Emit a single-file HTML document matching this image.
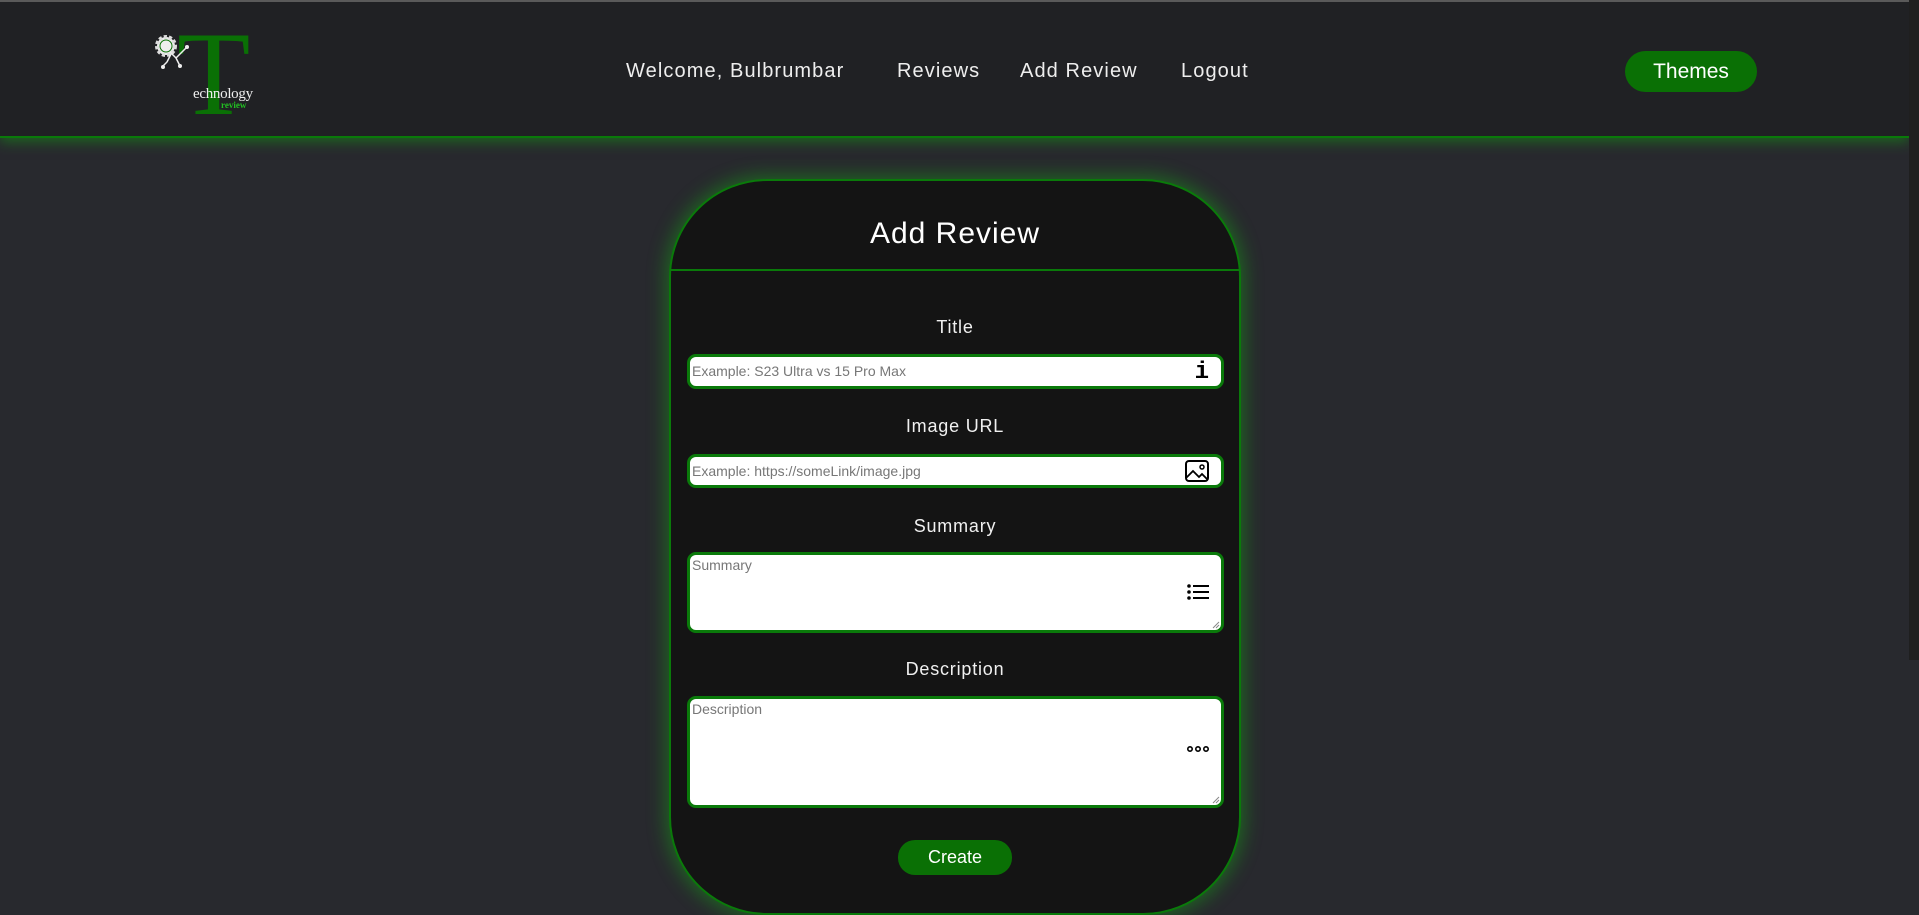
<!DOCTYPE html>
<html><head><meta charset="utf-8"><style>
*{box-sizing:border-box;margin:0;padding:0}
body{width:1919px;height:911px;overflow:hidden;background:#28292e;font-family:"Liberation Sans",sans-serif;position:relative}
.hdr{position:absolute;left:0;top:0;width:1909px;height:138px;background:#202124;border-top:2px solid #5a5a5a;border-bottom:2px solid #0a7a0a;box-shadow:0 4px 12px rgba(20,160,20,.5)}
.sb{position:absolute;right:0;top:0;width:10px;height:660px;background:#1f1f1f}
.nav a{position:absolute;top:58px;color:#eee;font-size:20px;text-decoration:none;letter-spacing:1.1px}
.themes{position:absolute;left:1625px;top:49px;width:132px;height:41px;border-radius:21px;background:#0a7005;color:#fff;font-size:21px;text-align:center;line-height:41px}
.card{position:absolute;left:669px;top:179px;width:572px;height:736px;background:#141414;border:2px solid #0a7a0a;border-radius:98px;box-shadow:0 0 18px 4px rgba(20,170,20,.45)}
.card h1{position:absolute;top:36px;width:100%;text-align:center;color:#fff;font-weight:normal;font-size:30px;letter-spacing:1px}
.div{position:absolute;top:88px;left:0;width:100%;height:2px;background:#0a7a0a}
.lbl{position:absolute;width:100%;text-align:center;color:#f0f0f0;font-size:18px;letter-spacing:.8px}
.in{position:absolute;left:16px;width:537px;background:#fff;border:3px solid #0a7a0a;border-radius:9px;color:#777;font-size:14px;padding:3px 2px}
.ic{position:absolute;right:12px}
.rs{position:absolute;right:1px;bottom:1px}
.btn{position:absolute;left:227px;top:659px;width:114px;height:35px;border-radius:17px;background:#0a7005;color:#fff;font-size:18px;text-align:center;line-height:35px}
</style></head><body>
<div class="hdr">
 <div style="position:absolute;left:177px;top:12px;font-family:'Liberation Serif',serif;font-size:120px;color:#0a7005;line-height:1">T</div>
 <svg style="position:absolute;left:152px;top:30px" width="50" height="40"><circle cx="14" cy="14" r="9" fill="#eee" stroke="#ddd" stroke-width="4" stroke-dasharray="3 2"/><circle cx="14" cy="14" r="6" fill="none" stroke="#0a7005" stroke-width="1"/><path d="M18 20l6 6 4-4M19 22l-4 8M24 26l4 8M28 22l6-6M15 30l-4 4" stroke="#eee" stroke-width="1.5" fill="none"/><circle cx="35" cy="15" r="2" fill="#eee"/><circle cx="11" cy="35" r="2" fill="#eee"/><circle cx="28" cy="34" r="2" fill="#eee"/></svg>
 <div style="position:absolute;left:193px;top:84px;font-family:'Liberation Serif',serif;font-size:15px;color:#eee;letter-spacing:-.3px">echnology</div>
 <div style="position:absolute;left:221px;top:98px;font-family:'Liberation Serif',serif;font-size:9px;font-weight:bold;color:#22c022">review</div>
 <div class="nav"><a style="left:626px">Welcome, Bulbrumbar</a><a style="left:897px">Reviews</a><a style="left:1020px">Add Review</a><a style="left:1181px">Logout</a></div>
 <div class="themes">Themes</div>
</div>
<div class="sb"></div>
<div class="card">
 <h1>Add Review</h1><div class="div"></div>
 <div class="lbl" style="top:136px">Title</div>
 <div class="in" style="top:173px;height:35px;line-height:23px">Example: S23 Ultra vs 15 Pro Max<span class="ic" style="top:4px;color:#000;font-family:'Liberation Mono',monospace;font-size:24px;font-weight:bold">i</span></div>
 <div class="lbl" style="top:235px">Image URL</div>
 <div class="in" style="top:273px;height:34px;line-height:23px">Example: https://someLink/image.jpg<svg class="ic" style="top:3px" width="24" height="22" viewBox="0 0 24 22"><rect x="1" y="1" width="22" height="20" rx="3" fill="none" stroke="#000" stroke-width="2"/><circle cx="17" cy="7" r="2" fill="none" stroke="#000" stroke-width="1.5"/><path d="M1 18l7-7 6 6 3-3 6 6" fill="none" stroke="#000" stroke-width="1.8"/></svg></div>
 <div class="lbl" style="top:335px">Summary</div>
 <div class="in" style="top:371px;height:81px;line-height:14px">Summary<svg class="ic" style="top:29px" width="22" height="16"><circle cx="2" cy="2" r="1.8"/><circle cx="2" cy="8" r="1.8"/><circle cx="2" cy="14" r="1.8"/><path d="M6 2h16M6 8h16M6 14h16" stroke="#000" stroke-width="2"/></svg><svg class="rs" width="8" height="8"><path d="M1 7L7 1M4 7L7 4" stroke="#888"/></svg></div>
 <div class="lbl" style="top:478px">Description</div>
 <div class="in" style="top:515px;height:112px;line-height:14px">Description<svg class="ic" style="top:46px" width="22" height="8"><circle cx="3" cy="4" r="2.2" fill="none" stroke="#000" stroke-width="1.6"/><circle cx="11" cy="4" r="2.2" fill="none" stroke="#000" stroke-width="1.6"/><circle cx="19" cy="4" r="2.2" fill="none" stroke="#000" stroke-width="1.6"/></svg><svg class="rs" width="8" height="8"><path d="M1 7L7 1M4 7L7 4" stroke="#888"/></svg></div>
 <div class="btn">Create</div>
</div>
</body></html>
